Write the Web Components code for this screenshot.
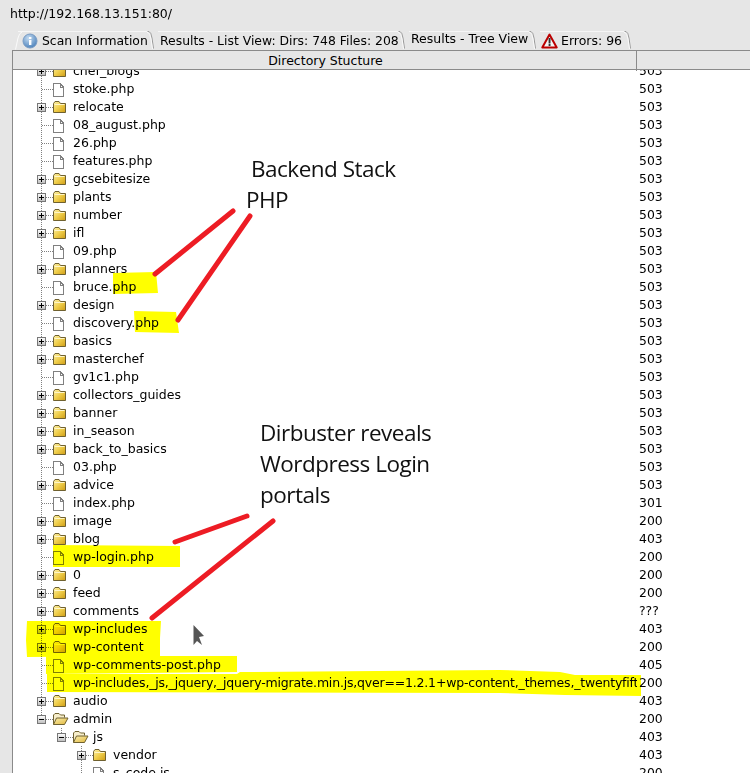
<!DOCTYPE html>
<html>
<head>
<meta charset="utf-8">
<title>DirBuster</title>
<style>
    html, body { margin: 0; padding: 0; background: #e6e6e6; }
    body { width: 750px; height: 773px; overflow: hidden; position: relative; font: 13px "DejaVu Sans", sans-serif; color: #000; }
</style>
</head>
<body>
<buster-window>
    <span slot="url">http://192.168.13.151:80/</span>
    <buster-tab slot="tabs" icon="info" width="140" first>Scan Information</buster-tab>
    <buster-tab slot="tabs" width="251">Results - List View: Dirs: 748 Files: 208</buster-tab>
    <buster-tab slot="tabs" width="131" selected>Results - Tree View</buster-tab>
    <buster-tab slot="tabs" icon="warn" width="95">Errors: 96</buster-tab>
    <result-tree slot="content"></result-tree>
</buster-window>
<paint-layer></paint-layer>

<script>
const ROWS = [
    ["d", 0, "chef_blogs", "503"], ["f", 0, "stoke.php", "503"], ["d", 0, "relocate", "503"],
    ["f", 0, "08_august.php", "503"], ["f", 0, "26.php", "503"], ["f", 0, "features.php", "503"],
    ["d", 0, "gcsebitesize", "503"], ["d", 0, "plants", "503"], ["d", 0, "number", "503"],
    ["d", 0, "ifl", "503"], ["f", 0, "09.php", "503"], ["d", 0, "planners", "503"],
    ["f", 0, "bruce.php", "503"], ["d", 0, "design", "503"], ["f", 0, "discovery.php", "503"],
    ["d", 0, "basics", "503"], ["d", 0, "masterchef", "503"], ["f", 0, "gv1c1.php", "503"],
    ["d", 0, "collectors_guides", "503"], ["d", 0, "banner", "503"], ["d", 0, "in_season", "503"],
    ["d", 0, "back_to_basics", "503"], ["f", 0, "03.php", "503"], ["d", 0, "advice", "503"],
    ["f", 0, "index.php", "301"], ["d", 0, "image", "200"], ["d", 0, "blog", "403"],
    ["f", 0, "wp-login.php", "200"], ["d", 0, "0", "200"], ["d", 0, "feed", "200"],
    ["d", 0, "comments", "???"], ["d", 0, "wp-includes", "403"], ["d", 0, "wp-content", "200"],
    ["f", 0, "wp-comments-post.php", "405"],
    ["f", 0, "wp-includes,_js,_jquery,_jquery-migrate.min.js,qver==1.2.1+wp-content,_themes,_twentyfifteen,_js", "200"],
    ["d", 0, "audio", "403"], ["o", 0, "admin", "200", "last"], ["o", 1, "js", "403", "last"],
    ["d", 2, "vendor", "403"], ["f", 2, "s_code.js", "200"]
];

const DOTS = 'stroke="#808080" stroke-dasharray="1 1" shape-rendering="crispEdges"';

class BusterWindow extends HTMLElement {
    constructor() {
        super();
        this.attachShadow({ mode: "open" });
        this.shadowRoot.innerHTML = `
<style>
    :host { display: flex; flex-direction: column; width: 750px; height: 773px; }
    .url { height: 30px; padding: 6px 0 0 10px; box-sizing: border-box; line-height: 16px; font-size: 12.5px; }
    .tabs { display: flex; height: 20px; padding-left: 15px; }
    .content { flex: 1; min-height: 0; margin-left: 12px; display: flex; }
</style>
<div class="url"><slot name="url"></slot></div>
<div class="tabs"><slot name="tabs"></slot></div>
<div class="content"><slot name="content"></slot></div>`;
    }
}

class BusterTab extends HTMLElement {
    constructor() {
        super();
        this.attachShadow({ mode: "open" });
    }

    connectedCallback() {
        const icons = {
            info: `<svg width="16" height="16" viewBox="0 0 16 16"><defs><radialGradient id="i" cx=".4" cy=".3" r=".8"><stop offset="0" stop-color="#c5dcf2"/><stop offset="1" stop-color="#3f78b5"/></radialGradient></defs><circle cx="8" cy="8" r="7" fill="url(#i)" stroke="#7a9cc4"/><rect x="7" y="7" width="2.4" height="5" fill="#fff"/><rect x="7" y="4" width="2.4" height="2" fill="#fff"/></svg>`,
            warn: `<svg width="17" height="16" viewBox="0 0 17 16"><path d="M8.5 1.5 L15.7 14.5 H1.3 Z" fill="#f4f4f4" stroke="#bb0000" stroke-width="2" stroke-linejoin="round"/><rect x="7.6" y="5" width="1.9" height="5.5" fill="#333"/><rect x="7.6" y="11" width="1.9" height="2" fill="#333"/></svg>`
        };
        const icon = this.getAttribute("icon");
        const selected = this.hasAttribute("selected");
        const pad = icon == "warn" ? 4 : icon ? 7 : 5;
        const first = this.hasAttribute("first")
            ? `<svg class="lead" width="8" height="20" viewBox="0 0 8 20"><path d="M0.5 19.5 L3 8 Q4 3 7.5 1.5" fill="none" stroke="#fafafa"/></svg>`
            : "";
        this.shadowRoot.innerHTML = `
<style>
    :host { display: block; position: relative; box-sizing: border-box; width: ${this.getAttribute("width")}px; height: 20px; }
    .tab { display: flex; align-items: center; gap: ${icon == "warn" ? 3 : 4}px; height: 20px; box-sizing: border-box; padding: ${selected ? "0 0 2px" : "1px 0 0"} ${pad}px; white-space: nowrap; font-size: ${selected || icon == "warn" ? 12.5 : 12.4}px; line-height: 16px; }
    .top { position: absolute; left: 3px; right: 7px; top: 1px; height: 1px; background: #f6f6f6; }
    svg.edge { position: absolute; right: 0; top: 0; }
    svg.lead { position: absolute; left: 0; top: 0; }
    svg { flex: none; }
</style>
<div class="top"></div>
${first}
<div class="tab">${icons[icon] || ""}<slot></slot></div>
<svg class="edge" width="8" height="20" viewBox="0 0 8 20"><path d="M0.5 1.5 H2 Q4 2 5 8 L6.5 18.5" fill="none" stroke="#9a9a9a"/><path d="M-0.5 2.5 H1 Q3 3 4 9 L5.5 19" fill="none" stroke="#fafafa"/></svg>`;
    }
}

class ResultTree extends HTMLElement {
    constructor() {
        super();
        this.attachShadow({ mode: "open" });
        this.shadowRoot.innerHTML = `
<style>
    :host { display: flex; flex-direction: column; flex: 1; min-width: 0; border: 1px solid #8a8a8a; border-right: 0; border-bottom: 0; background: #fff; }
    .head { flex: none; display: grid; grid-template-columns: 624px 1fr; height: 18px; background: #e6e6e6; border-bottom: 1px solid #8a8a8a; font-size: 12.5px; line-height: 20px; position: relative; z-index: 1; }
    .head div:first-child { text-align: center; padding-left: 2px; border-right: 1px solid #8a8a8a; }
    .body { flex: 1; min-height: 0; overflow: hidden; }
    .rows { margin-top: -8px; }
</style>
<div class="head"><div>Directory Stucture</div><div></div></div>
<div class="body"><div class="rows"></div></div>`;
        const rows = this.shadowRoot.querySelector(".rows");
        for (const [kind, depth, name, status, last] of ROWS) {
            const row = document.createElement("tree-row");
            row.setAttribute("kind", kind);
            row.setAttribute("depth", depth);
            row.setAttribute("status", status);
            if (last) row.setAttribute("last", "");
            // the very long url is set a bit tighter in the original
            if (name.length > 60) row.setAttribute("tight", "");
            row.textContent = name;
            rows.append(row);
        }
    }
}

class TreeRow extends HTMLElement {
    constructor() {
        super();
        this.attachShadow({ mode: "open" });
    }

    icon(kind, x) {
        if (kind == "f") {
            return `<path transform="translate(${x} 0)" d="M1.5 3.5 H8 L11.5 7 V16.5 H1.5 Z M8 3.5 V7 H11.5" fill="#fff" stroke="#555" stroke-opacity=".75" shape-rendering="crispEdges"/>`;
        }
        if (kind == "o") {
            return `<g transform="translate(${x} 0)"><path d="M1.5 14.5 V5 L3 3.5 H7 L8.5 5 H12.5 V7.5" fill="#f7eecb" stroke="#6f6130"/><path d="M1.5 14.5 L4.5 8 H16 L12.5 14.5 Z" fill="url(#fo)" stroke="#6f6130" stroke-linejoin="round"/></g>`;
        }
        return `<g transform="translate(${x} 0)"><path d="M1.5 14.5 V5.5 L3 3.5 H7 L8.5 5.5 H13.5 V14.5 Z" fill="url(#fc)" stroke="#6f6130" stroke-linejoin="round"/><path d="M2.5 6.5 H12.5" stroke="#fff6c8"/></g>`;
    }

    connectedCallback() {
        const kind = this.getAttribute("kind");
        const depth = +this.getAttribute("depth");
        const isFile = kind == "f";
        const left = 24 + depth * 20;
        const ex = left + 4.5;
        const w = 60 + depth * 20;
        const parts = [];
        // vertical guide lines for this level
        if (depth == 0) {
            parts.push(`<line x1="${ex}" y1="0" x2="${ex}" y2="${this.hasAttribute("last") ? 9 : 18}" ${DOTS}/>`);
        } else {
            parts.push(`<line x1="${ex}" y1="0" x2="${ex}" y2="${this.hasAttribute("last") || isFile ? 9 : 18}" ${DOTS}/>`);
        }
        parts.push(`<line x1="${ex}" y1="9.5" x2="${left + 16}" y2="9.5" ${DOTS}/>`);
        if (!isFile) {
            const mark = kind == "d"
                ? `<path d="M${left + 2} 9.5 H${left + 7} M${ex} 7 V12" stroke="#000" shape-rendering="crispEdges"/>`
                : `<path d="M${left + 2} 9.5 H${left + 7}" stroke="#000" shape-rendering="crispEdges"/>`;
            parts.push(`<rect x="${left + .5}" y="5.5" width="8" height="8" fill="url(#ex)" stroke="#777" shape-rendering="crispEdges"/>${mark}`);
        }
        parts.push(this.icon(kind, left + 15));
        this.shadowRoot.innerHTML = `
<style>
    :host { display: grid; grid-template-columns: 624px 1fr; height: 18px; line-height: 18px; font-size: 12.5px; white-space: nowrap; }
    .name { display: flex; overflow: hidden; }
    svg { flex: none; display: block; }
    .label { letter-spacing: ${this.hasAttribute("tight") ? "-0.19px" : "normal"}; }
    .status { padding-left: 2px; font-size: 12.4px; }
</style>
<div class="name"><svg width="${w}" height="18" viewBox="0 0 ${w} 18">
    <defs>
        <linearGradient id="fc" x1="0" y1="0" x2="1" y2="1"><stop offset="0" stop-color="#fbf0a8"/><stop offset=".5" stop-color="#f0ce4a"/><stop offset="1" stop-color="#cf9d18"/></linearGradient>
        <linearGradient id="fo" x1="0" y1="0" x2="1" y2="1"><stop offset="0" stop-color="#fbeeb0"/><stop offset="1" stop-color="#e0b73a"/></linearGradient>
        <linearGradient id="ex" x1="0" y1="0" x2="0" y2="1"><stop offset="0" stop-color="#fff"/><stop offset="1" stop-color="#bcbcbc"/></linearGradient>
    </defs>
    ${parts.join("")}
</svg><span class="label"><slot></slot></span></div>
<div class="status">${this.getAttribute("status")}</div>`;
    }
}

// hand painted markup that sits on top of the screenshot
class PaintLayer extends HTMLElement {
    constructor() {
        super();
        this.attachShadow({ mode: "open" });
        const marks = [
            "113,273 156,272 158,293 113,294",
            "134,311 176,312 179,333 135,332",
            "53,545 180,546 180,567 53,567",
            "27,621 161,621 160,638 160,656 27,657 26,640",
            "46,656 237,656 237,672 46,674",
            "47,674 237,674 240,672 500,670 560,672 575,675 641,675 641,696 565,695 500,693 47,692"
        ];
        const strokes = [[233, 211, 155, 274], [250, 216, 178, 320], [247, 516, 175, 542], [273, 521, 152, 618]];
        this.shadowRoot.innerHTML = `
<style>
    :host { position: absolute; left: 0; top: 0; width: 750px; height: 773px; pointer-events: none; }
    svg { position: absolute; left: 0; top: 0; }
    .marks { mix-blend-mode: multiply; }
    .note { position: absolute; font: 22.5px/31px "Open Sans", sans-serif; letter-spacing: -0.5px; color: #111; white-space: pre; }
</style>
<svg class="marks" width="750" height="773">${marks.map(p => `<polygon points="${p}" fill="#ffff00"/>`).join("")}</svg>
<svg width="750" height="773">
    ${strokes.map(s => `<line x1="${s[0]}" y1="${s[1]}" x2="${s[2]}" y2="${s[3]}" stroke="#ed1c24" stroke-width="5" stroke-linecap="round"/>`).join("")}
    <path d="M193.5 625 L204 636 L199 637 L202 645 L197 641 L193.5 645 Z" fill="#555"/>
</svg>
<div class="note" style="left:251px;top:153px">Backend Stack</div>
<div class="note" style="left:246px;top:184px">PHP</div>
<div class="note" style="left:260px;top:417px">Dirbuster reveals
Wordpress Login
portals</div>`;
    }
}

customElements.define("buster-window", BusterWindow);
customElements.define("buster-tab", BusterTab);
customElements.define("tree-row", TreeRow);
customElements.define("result-tree", ResultTree);
customElements.define("paint-layer", PaintLayer);
</script>
</body>
</html>
